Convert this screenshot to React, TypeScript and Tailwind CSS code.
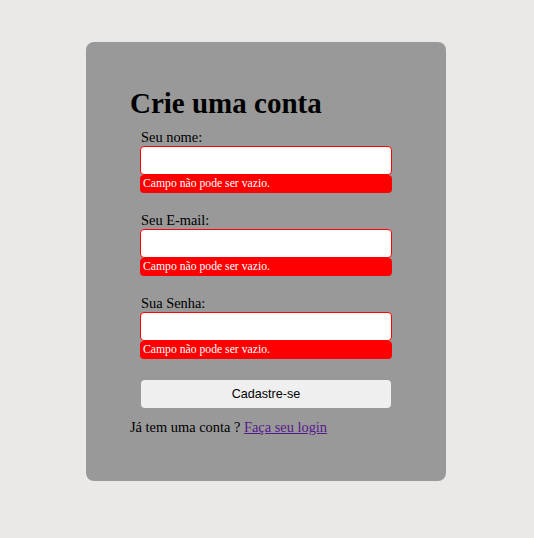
import React from "react";

const fields = [
  { id: "nome", label: "Seu nome:", type: "text" },
  { id: "email", label: "Seu E-mail:", type: "email" },
  { id: "senha", label: "Sua Senha:", type: "password" },
];

function Field({ id, label, type }: { id: string; label: string; type: string }) {
  return (
    <div className="flex flex-col">
      <label htmlFor={id} className="pl-[1px] text-[14.4px] leading-[17px] text-black">
        {label}
      </label>
      <input
        id={id}
        type={type}
        className="h-[29px] w-[252px] rounded-[4px] border border-[#ff0000] bg-white px-1 outline-none"
      />
      <span className="h-[18px] w-[252px] rounded-[4px] bg-[#ff0000] pl-[3px] text-[11.7px] leading-[18px] text-white">
        Campo não pode ser vazio.
      </span>
    </div>
  );
}

export default function App() {
  return (
    <div className="min-h-[538px] w-full bg-[#eae9e7] pt-[42px] font-['Liberation_Serif','Times_New_Roman',serif]">
      <div className="ml-[86px] flex h-[439px] w-[360px] flex-col rounded-[8px] bg-[#999999] pl-[44px] pt-[44px]">
        <h1 className="text-[29px] font-bold leading-[34px] text-black">Crie uma conta</h1>
        <form className="ml-[10px] mt-[9px] flex flex-col gap-[19px]">
          {fields.map((f) => (
            <Field key={f.id} {...f} />
          ))}
          <button
            type="button"
            className="ml-[1px] mt-[2px] h-[28px] w-[250px] rounded-[4px] bg-[#efefef] font-['Liberation_Sans',Arial,sans-serif] text-[12.6px] text-black"
          >
            Cadastre-se
          </button>
        </form>
        <p className="mt-[11px] text-[14.4px] leading-[17px] text-black">
          Já tem uma conta ?{" "}
          <a href="#" className="text-[#551a8b] underline">
            Faça seu login
          </a>
        </p>
      </div>
    </div>
  );
}
